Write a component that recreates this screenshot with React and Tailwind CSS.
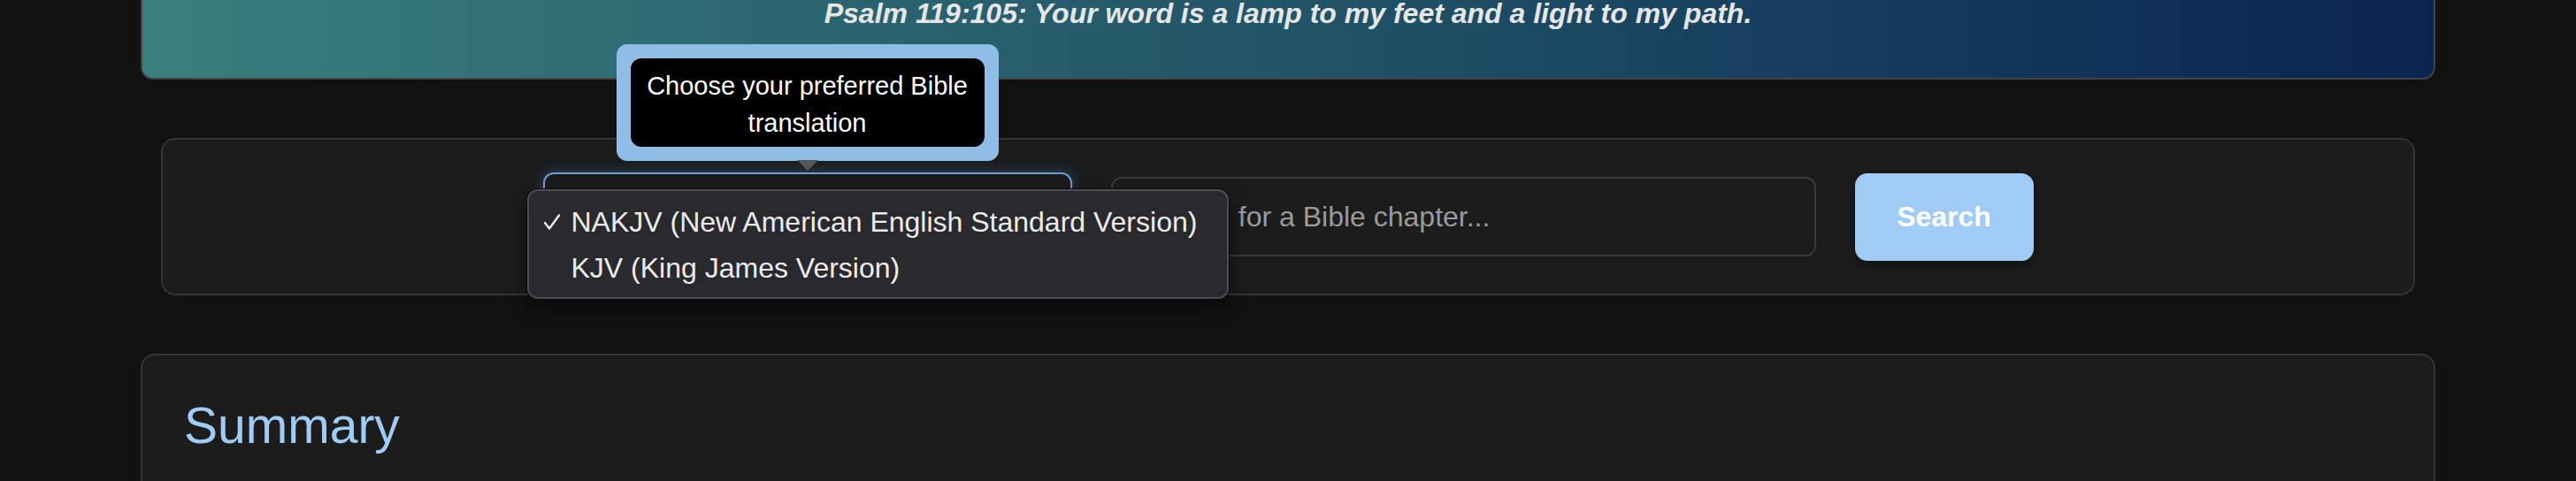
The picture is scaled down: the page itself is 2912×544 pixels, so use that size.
import React from 'react';

function Check() {
  return (
    <svg width="18" height="18" viewBox="0 0 18 18" fill="none">
      <polyline points="1,10 6,16.5 17,1.5" stroke="#ececec" strokeWidth="2.4" strokeLinecap="round" strokeLinejoin="round" />
    </svg>
  );
}

export default function App() {
  return (
    <div className="w-full h-[544px] overflow-hidden bg-[#121212] font-['Liberation_Sans',Arial,sans-serif]">
      <div className="px-[159px]">
        {/* verse banner, scrolled partly out of view */}
        <div className="-mt-[50px] pt-[45px] pb-[54px] border-2 border-[#444] rounded-b-[14px] bg-linear-to-r from-[#3a7f7e] via-[#225467] to-[#0b2451]">
          <p className="text-center text-[32px] leading-[37px] font-bold italic text-[#e6e6e6]">
            Psalm 119:105: Your word is a lamp to my feet and a light to my path.
          </p>
        </div>

        {/* search panel */}
        <div className="mx-[23px] mt-[66px] h-[178px] bg-[#1c1c1c] border-2 border-[#353535] rounded-[16px] flex items-center justify-center gap-[44px]">
          <div className="relative">
            <div className="w-[598px] h-[101px] bg-[#1b1b1b] border-2 border-[#6d9dcc] rounded-[12px] shadow-[0_0_14px_rgba(70,130,200,0.45)]"></div>

            {/* tooltip */}
            <div className="absolute left-1/2 -translate-x-1/2 bottom-[calc(100%+13px)] bg-[#8fbde6] p-[16px] rounded-[12px]">
              <div className="w-[400px] h-[100px] pt-[10px] bg-black rounded-[12px] text-center text-white text-[29px] leading-[42px] px-[16px]">
                Choose your preferred Bible translation
              </div>
            </div>
            <div className="absolute left-1/2 -translate-x-1/2 -top-[14px] w-0 h-0 border-l-[12px] border-r-[12px] border-t-[12px] border-l-transparent border-r-transparent border-t-[#555]"></div>

            {/* open select menu */}
            <div className="absolute -left-[18px] top-[19px] w-[793px] h-[124px] pt-[9px] bg-[#2a292e] border-2 border-[#4d4c52] rounded-[12px] shadow-[0_0_0_1px_#0a0a0a,0_8px_20px_rgba(0,0,0,0.5)] text-[32px] leading-[52px] text-[#ececec]">
              <div className="flex items-center pl-[17px]">
                <span className="w-[31px] flex items-center"><Check /></span>
                <span>NAKJV (New American English Standard Version)</span>
              </div>
              <div className="flex items-center pl-[48px]">
                <span>KJV (King James Version)</span>
              </div>
            </div>
          </div>

          <input
            type="text"
            placeholder="Search for a Bible chapter..."
            className="w-[797px] h-[90px] px-[32px] bg-[#1c1c1c] border-2 border-[#3a3a3a] rounded-[12px] text-[32px] text-white placeholder:text-[#9a9a9a] outline-none"
          />

          <button className="w-[202px] h-[99px] bg-[#9fcbf4] rounded-[14px] text-white text-[32px] font-bold shadow-[0_4px_10px_rgba(0,0,0,0.4)]">
            Search
          </button>
        </div>

        {/* summary */}
        <div className="mt-[66px] h-[240px] bg-[#1c1c1c] border-2 border-[#363636] rounded-[16px] pt-[47px] pl-[47px]">
          <h2 className="text-[57px] leading-[65px] text-[#9fcbf4]">Summary</h2>
        </div>
      </div>
    </div>
  );
}
